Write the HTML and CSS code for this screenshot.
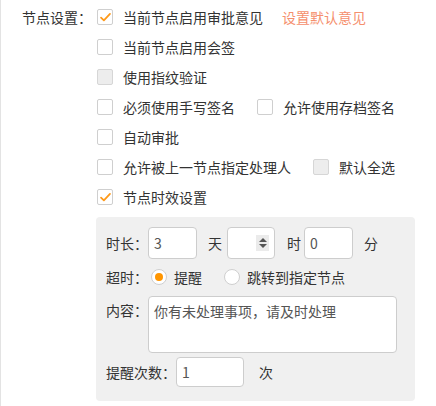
FILE: index.html
```html
<!DOCTYPE html>
<html lang="zh">
<head>
<meta charset="utf-8">
<link rel="stylesheet" href="styles.css">
</head>
<body>
<div class="page">
  <div class="form-row">
    <div class="form-label">节点设置：</div>
    <div class="options">
      <div class="opt-row">
        <label class="cb-item"><span class="cb checked"><svg viewBox="0 0 16 16" width="13" height="13"><path d="M2.5 8.2 L6 11.6 L13.5 3.6" fill="none" stroke="#ff9a1a" stroke-width="2.2" stroke-linecap="round" stroke-linejoin="round"/></svg></span>当前节点启用审批意见</label>
        <span class="link">设置默认意见</span>
      </div>
      <div class="opt-row">
        <label class="cb-item"><span class="cb"></span>当前节点启用会签</label>
      </div>
      <div class="opt-row">
        <label class="cb-item"><span class="cb disabled"></span>使用指纹验证</label>
      </div>
      <div class="opt-row">
        <label class="cb-item"><span class="cb"></span>必须使用手写签名</label>
        <label class="cb-item"><span class="cb"></span>允许使用存档签名</label>
      </div>
      <div class="opt-row">
        <label class="cb-item"><span class="cb"></span>自动审批</label>
      </div>
      <div class="opt-row">
        <label class="cb-item"><span class="cb"></span>允许被上一节点指定处理人</label>
        <label class="cb-item"><span class="cb disabled"></span>默认全选</label>
      </div>
      <div class="opt-row">
        <label class="cb-item"><span class="cb checked"><svg viewBox="0 0 16 16" width="13" height="13"><path d="M2.5 8.2 L6 11.6 L13.5 3.6" fill="none" stroke="#ff9a1a" stroke-width="2.2" stroke-linecap="round" stroke-linejoin="round"/></svg></span>节点时效设置</label>
      </div>

      <div class="panel">
        <div class="p-row r-duration">
          <span class="p-label">时长：</span>
          <span class="input w49"><span class="val">3</span></span>
          <span class="unit u1">天</span>
          <span class="input w48 num"><span class="spinner"><i class="up"></i><i class="down"></i></span></span>
          <span class="unit u2">时</span>
          <span class="input w49"><span class="val">0</span></span>
          <span class="unit u3">分</span>
        </div>
        <div class="p-row r-timeout">
          <span class="p-label">超时：</span>
          <label class="radio-item"><span class="radio on"></span>提醒</label>
          <label class="radio-item"><span class="radio"></span>跳转到指定节点</label>
        </div>
        <div class="p-row r-content">
          <span class="p-label top">内容：</span>
          <div class="textarea">你有未处理事项，请及时处理</div>
        </div>
        <div class="p-row r-count">
          <span class="p-label">提醒次数：</span>
          <span class="input w68 h30"><span class="val">1</span></span>
          <span class="unit u4">次</span>
        </div>
      </div>
    </div>
  </div>
</div>
</body>
</html>
```

FILE: styles.css
```css
* { box-sizing: border-box; }
html, body { margin: 0; padding: 0; background: #fff; }
body {
  font-family: "Noto Sans CJK SC", "Microsoft YaHei", sans-serif;
  font-size: 14px;
  color: #333;
}
.page {
  width: 436px;
  height: 406px;
  border-left: 1px solid #e3e3e3;
  overflow: hidden;
}
.form-row {
  display: flex;
  align-items: flex-start;
  padding-left: 21px;
  padding-top: 2px;
}
.form-label {
  width: 75px;
  line-height: 30px;
  white-space: nowrap;
}
.options {
  display: flex;
  flex-direction: column;
}
.opt-row {
  display: flex;
  align-items: center;
  height: 30px;
  white-space: nowrap;
}
.cb-item {
  display: inline-flex;
  align-items: center;
  margin-right: 22px;
}
.cb-item:first-child + .link { margin-left: -3px; }
.cb {
  width: 16px;
  height: 16px;
  border: 1px solid #cfcfcf;
  border-radius: 2px;
  background: #fff;
  margin-right: 10px;
  display: inline-flex;
  align-items: center;
  justify-content: center;
  flex: none;
}
.cb.disabled {
  background: #ededed;
  border-color: #d6d6d6;
}
.link {
  color: #f58f6d;
}
.panel {
  margin-top: 5px;
  margin-left: -1px;
  width: 319px;
  background: #f0f0f0;
  border-radius: 4px;
  padding: 10px 10px 14px 10px;
}
.p-row {
  display: flex;
  align-items: center;
  white-space: nowrap;
}
.r-timeout { margin-top: 6px; height: 24px; }
.r-content { margin-top: 7px; align-items: flex-start; }
.r-count { margin-top: 4px; }
.p-label { line-height: 20px; }
.p-label.top { line-height: 28px; }
.input {
  display: inline-flex;
  align-items: center;
  height: 32px;
  background: #fff;
  border: 1px solid #cdcdcd;
  border-radius: 4px;
  padding-left: 5px;
  color: #555;
}
.w49 { width: 49px; }
.w48 { width: 48px; }
.w68 { width: 68px; }
.h30 { height: 30px; }
.num {
  justify-content: flex-end;
  padding-right: 5px;
}
.spinner {
  width: 13px;
  height: 16px;
  background: #ebebeb;
  display: flex;
  flex-direction: column;
  align-items: center;
  justify-content: center;
  gap: 2px;
}
.spinner i {
  display: block;
  width: 0;
  height: 0;
  border-left: 4px solid transparent;
  border-right: 4px solid transparent;
}
.spinner .up { border-bottom: 4px solid #555; }
.spinner .down { border-top: 4px solid #555; }
.unit.u1 { margin: 0 5px 0 11px; }
.unit.u2 { margin: 0 3px 0 12px; }
.unit.u3 { margin-left: 11px; }
.unit.u4 { margin-left: 15px; }
.radio-item {
  display: inline-flex;
  align-items: center;
  margin-right: 22px;
}
.radio-item:first-of-type { margin-left: 3px; }
.radio {
  width: 16px;
  height: 16px;
  border: 1px solid #cfcfcf;
  border-radius: 50%;
  background: #fff;
  margin-right: 7px;
  display: inline-flex;
  align-items: center;
  justify-content: center;
}
.radio.on::after {
  content: "";
  width: 8px;
  height: 8px;
  border-radius: 50%;
  background: #ff9500;
}
.textarea {
  width: 249px;
  height: 57px;
  background: #fff;
  border: 1px solid #cdcdcd;
  border-radius: 4px;
  padding: 4px 5px;
  line-height: 20px;
  color: #555;
}
```
